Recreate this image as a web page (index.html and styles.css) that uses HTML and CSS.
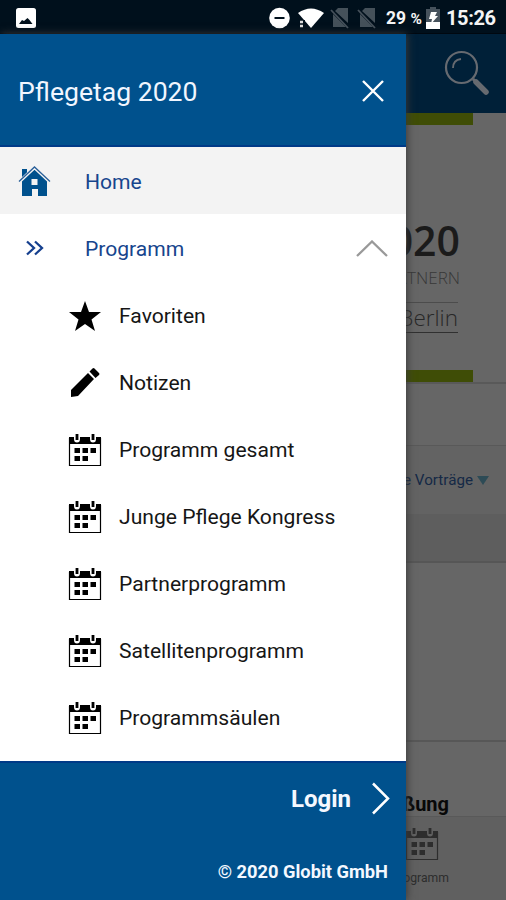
FILE: index.html
```html
<!DOCTYPE html>
<html lang="de">
<head>
<meta charset="utf-8">
<title>Pflegetag 2020</title>
<link rel="stylesheet" href="styles.css">
</head>
<body>
<svg width="0" height="0" class="defs">
  <symbol id="calendar" viewBox="0 0 34 34">
    <path d="M1 4h5v2q0 3.500 3 3.500t3-3.500V4h10v2q0 3.500 3 3.500t3-3.500V4h5v7H1z" fill="currentColor"/>
    <path d="M1.500 5v27.500h31V5" fill="none" stroke="currentColor" stroke-width="1.200"/>
    <path d="M9 1v6M25 1v6" stroke="currentColor" stroke-width="2.800" fill="none"/>
    <path d="M6.500 15H12v5H6.500zM14.500 15H20v5h-5.500zM22.500 15H28v5h-5.500zM6.500 23H12v5H6.500zM14.500 23H20v5h-5.500z" fill="currentColor"/>
  </symbol>
</svg>
<div class="status">
  <svg class="photo" width="20" height="20" viewBox="0 0 20 20"><rect width="20" height="20" rx="2.5" fill="#fff"/><path d="M3 16l3-4 2 1 3.500-3 2 2 3 4z" fill="#00101c"/></svg>
  <svg class="signals" width="126" height="24" viewBox="0 0 126 24">
    <circle cx="11.500" cy="12" r="10.300" fill="#fff"/><path d="M6.500 12h10" stroke="#00101c" stroke-width="2"/>
    <path d="M30 7q13-9 26 0L43 22z" fill="#fff"/><path d="M29 14h8v8h-8z" fill="#00101c"/><path d="M32 16h3M32 20h3" stroke="#ddd" stroke-width="2.500"/>
    <g id="sim"><path d="M70 2h10v15L67 5zM65 8l13 13H65z" fill="#45515a"/><path d="M63 4l17 18" stroke="#46515b" stroke-width="1.800"/></g>
    <use href="#sim" x="27"/>
  </svg>
  <span class="percent">29 <small>%</small></span>
  <svg class="battery" width="14" height="22" viewBox="0 0 14 22"><path d="M4 0h6v2h4v20H0V2h4z" fill="#46525c"/><path d="M0 15h14v7H0z" fill="#fff"/><path d="M5 5h6L9 9h3l-7 8 1-5H3z" fill="#fff"/></svg>
  <span class="clock">15:26</span>
</div>
<div class="screen">
  <nav class="drawer">
    <header class="head">
      <h1>Pflegetag 2020</h1>
      <svg width="22" height="22" viewBox="0 0 22 22"><path d="M1 1l20 20M21 1L1 21" stroke="#fff" stroke-width="2.400"/></svg>
    </header>
    <ul class="menu">
      <li class="row active"><svg class="lead" width="34" height="32" viewBox="0 0 34 32"><path d="M4 3h5v6l8-6 12 11v16h-9v-7h-6v7H4z" fill="#00518d"/><path d="M1 16L16.500 1.500 32 16" fill="none" stroke="#f3f3f3" stroke-width="3.200"/><path d="M1 15.500L16.500 1 32 15.500" fill="none" stroke="#295f99" stroke-width="1.300"/><path d="M13.500 13h6v6h-6z" fill="#f3f3f3"/></svg><span>Home</span></li>
      <li class="row"><svg class="lead" width="34" height="32" viewBox="0 0 34 32"><path d="M9 8.500l7 6.500-7 6.500M17 8.500l7 6.500-7 6.500" fill="none" stroke="#153f8e" stroke-width="2.300"/></svg><span>Programm</span><svg class="chevron" width="32" height="18" viewBox="0 0 32 18"><path d="M1 16L16 1.500 31 16" fill="none" stroke="#999" stroke-width="2.300"/></svg></li>
      <li class="row sub"><svg width="34" height="34" viewBox="0 0 34 34"><path d="M17 2l4 11h12l-9.500 7.500L27 32l-10-7-10 7 3.500-11.500L1 13h12z"/></svg><span>Favoriten</span></li>
      <li class="row sub"><svg width="34" height="34" viewBox="0 0 34 34"><path d="M3 24L20 7l6 6L10 30l-7 1zM21.500 5.500l3-3q1-1 2 0l4.500 4.500q1 1 0 2l-3.500 3z"/></svg><span>Notizen</span></li>
      <li class="row sub"><svg width="34" height="34"><use href="#calendar"/></svg><span>Programm gesamt</span></li>
      <li class="row sub"><svg width="34" height="34"><use href="#calendar"/></svg><span>Junge Pflege Kongress</span></li>
      <li class="row sub"><svg width="34" height="34"><use href="#calendar"/></svg><span>Partnerprogramm</span></li>
      <li class="row sub"><svg width="34" height="34"><use href="#calendar"/></svg><span>Satellitenprogramm</span></li>
      <li class="row sub"><svg width="34" height="34"><use href="#calendar"/></svg><span>Programmsäulen</span></li>
    </ul>
    <footer class="foot">
      <div class="login"><span>Login</span><svg width="20" height="34" viewBox="0 0 20 34"><path d="M2 1.500l15 15L2 31.500" fill="none" stroke="#fff" stroke-width="2.500"/></svg></div>
      <div class="copy">© 2020 Globit GmbH</div>
    </footer>
  </nav>
  <main class="page">
    <div class="appbar"><svg width="46" height="46" viewBox="0 0 46 46" fill="none" stroke="#666a70"><circle cx="17.500" cy="17.500" r="15.500" stroke-width="2.200"/><path d="M9 18q0-8 8-9" stroke-width="1.800"/><path d="M29 29l3 3" stroke-width="3"/><path d="M32 32l10 10" stroke-width="5.500" stroke-linecap="round"/></svg></div>
    <section class="banner">
      <div class="green"></div>
      <div class="title">2020</div>
      <div class="partner">PARTNERN</div>
      <div class="city">Berlin</div>
      <div class="green last"></div>
    </section>
    <div class="blank"></div>
    <div class="filter"><span>Alle Vorträge</span><i></i></div>
    <div class="band"></div>
    <div class="slot"></div>
    <div class="event"><span>Begrüßung</span></div>
    <div class="tab"><svg width="34" height="34"><use href="#calendar"/></svg><span>Programm</span></div>
  </main>
</div>
</body>
</html>
```
FILE: styles.css
```css
* { box-sizing: border-box; }
body { margin: 0; width: 506px; height: 900px; overflow: hidden; font-family: Roboto, sans-serif; background: #666; }
.defs { display: block; }
.status { height: 34px; background: #00101c; border-bottom: 1px solid #000810; display: flex; align-items: center; color: #f5f5f5; padding: 2px 10px 0 16px; }
.photo { margin-right: auto; }
.percent { width: 39px; margin: 1px 0 0 -8px; font-size: 17.5px; font-weight: 700; white-space: nowrap; }
.percent small { font-size: 15.5px; }
.signals, .percent, .battery, .clock { flex: none; }
.battery { margin: 0 6px 0 1px; }
.clock { width: 50px; font-size: 20px; font-weight: 700; white-space: nowrap; letter-spacing: -0.4px; }
.screen { display: flex; height: 866px; }
.drawer { width: 406px; flex: none; background: #fff; display: flex; flex-direction: column; box-shadow: 1px 0 8px #3a3a3a; z-index: 1; }
.head { height: 113px; background: #00518d; border-bottom: 2px solid #003a87; display: flex; align-items: center; justify-content: space-between; padding: 2px 22px 0 18px; }
h1 { margin: 2px 0 0; color: #f1f6ff; font-size: 26.6px; font-weight: 400; }
.menu { list-style: none; margin: 0; padding: 0; height: 614px; }
.row { height: 67px; display: flex; align-items: center; padding: 2px 18px 0; color: #17458d; font-size: 21.1px; }
.row .lead { margin-right: 33px; }
.active { background: #f3f3f3; }
.chevron { margin-left: auto; }
.sub { padding-left: 68px; color: #161616; }
.sub svg { margin-right: 17px; color: #000; }
.foot { flex: 1; background: #00518d; border-top: 2px solid #003a87; color: #f4f8ff; font-weight: 700; text-align: right; }
.login { display: flex; justify-content: flex-end; align-items: center; height: 72px; gap: 20px; padding-right: 15px; font-size: 24px; }
.copy { margin-top: 25px; padding-right: 18px; font-size: 18.3px; line-height: 24px; }
.page { width: 100px; flex: none; overflow: hidden; display: flex; flex-direction: column; }
.page > * { flex: none; }
.appbar { height: 79px; background: #002038; padding: 16px 16px 0; display: flex; justify-content: flex-end; }
.banner { height: 271px; border-bottom: 2px solid #595959; display: flex; flex-direction: column; align-items: flex-end; padding-right: 46px; font-family: "Open Sans", sans-serif; }
.green { width: 70px; height: 12px; margin-right: -13px; background: #3f4d06; flex: none; }
.title { margin-top: 87px; font-size: 41px; line-height: 56px; font-weight: 600; color: #1b1b1b; }
.partner { font-size: 17px; line-height: 20px; color: #383838; font-weight: 300; }
.city { margin: 14px 2px 0 0; width: 70px; display: flex; justify-content: flex-end; font-size: 22.5px; line-height: 29px; border-top: 1px solid #4c4c4c; border-bottom: 1px solid #303030; color: #282828; font-weight: 300; }
.last { margin-top: 37px; }
.blank { height: 62px; border-bottom: 1px solid #595959; }
.filter { height: 68px; background: #636363; display: flex; justify-content: flex-end; align-items: center; gap: 4px; padding-right: 17px; font-size: 15.2px; color: #152946; white-space: nowrap; }
.filter i { border: 6px solid transparent; border-top: 9px solid #2d4b56; border-bottom: 0; }
.band { height: 49px; background: #5e5e5e; border-bottom: 2px solid #565656; }
.slot { height: 179px; border-bottom: 2px solid #575757; }
.event { height: 75px; display: flex; justify-content: flex-end; padding: 50px 57px 0 0; font-size: 20px; line-height: 24px; font-weight: 700; color: #080808; border-bottom: 1px solid #595959; }
.tab { height: 83px; background: #606060; color: #2d2d2d; display: flex; flex-direction: column; align-items: flex-end; padding: 10px 57px 0 0; font-size: 12.2px; }
.tab svg { margin: 0 10px 10px 0; }
```
